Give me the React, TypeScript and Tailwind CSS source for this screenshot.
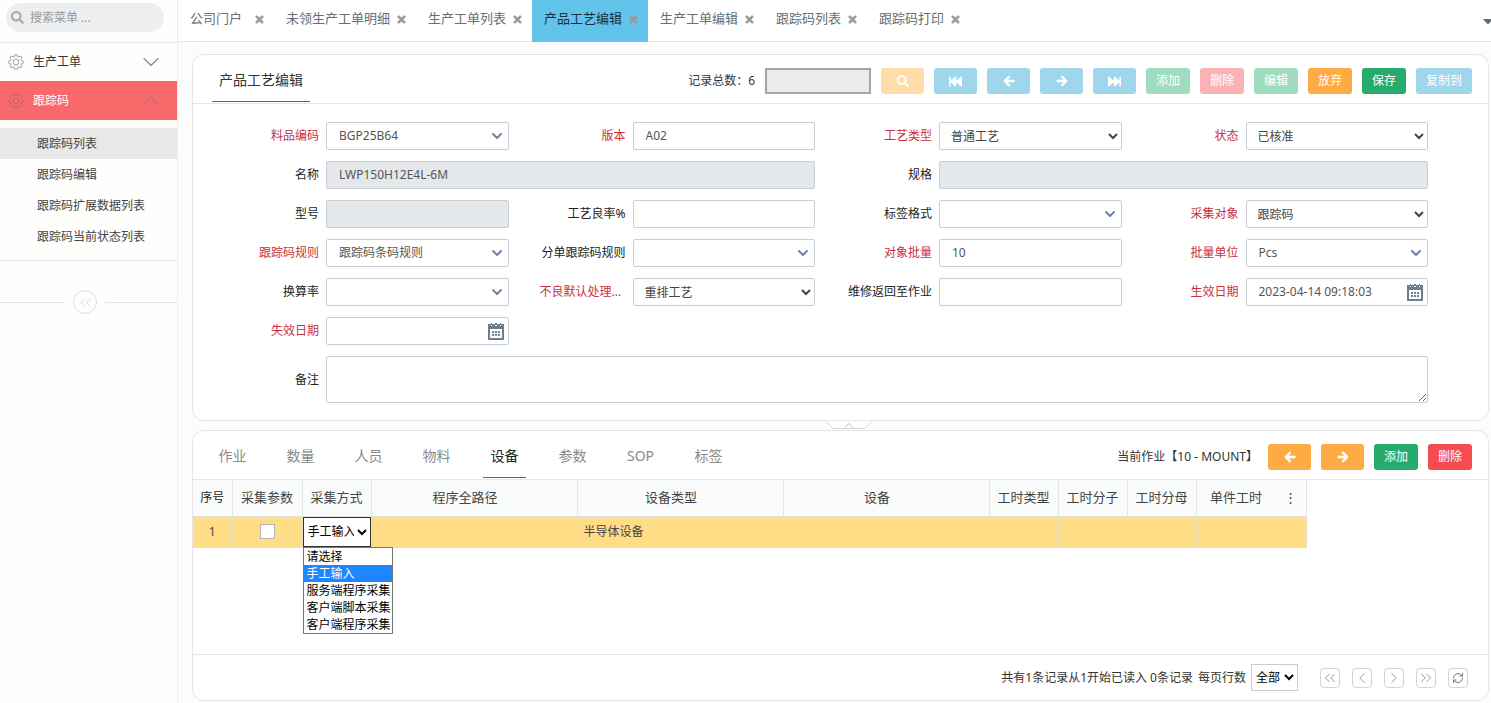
import { ReactNode } from "react";
import { FaArrowLeft, FaArrowRight, FaCaretDown, FaFastBackward, FaFastForward, FaSearch, FaTimes } from "react-icons/fa";
import { BsGear } from "react-icons/bs";
import { ChevronDown, ChevronLeft, ChevronRight, ChevronUp, ChevronsLeft, ChevronsRight, RefreshCw } from "lucide-react";

const tabs = [
  "公司门户",
  "未领生产工单明细",
  "生产工单列表",
  "产品工艺编辑",
  "生产工单编辑",
  "跟踪码列表",
  "跟踪码打印",
];
const activeTab = "产品工艺编辑";

const subMenu = ["跟踪码列表", "跟踪码编辑", "跟踪码扩展数据列表", "跟踪码当前状态列表"];

const detailTabs = ["作业", "数量", "人员", "物料", "设备", "参数", "SOP", "标签"];

const columns = [
  { title: "序号", width: "w-[39px]" },
  { title: "采集参数", width: "w-[70px]" },
  { title: "采集方式", width: "w-[69px]" },
  { title: "程序全路径", width: "w-[206px] pr-[18px]" },
  { title: "设备类型", width: "w-[206px] pr-[18px]" },
  { title: "设备", width: "w-[206px] pr-[18px]" },
  { title: "工时类型", width: "w-[69px]" },
  { title: "工时分子", width: "w-[69px]" },
  { title: "工时分母", width: "w-[69px]" },
];

const collectModes = ["请选择", "手工输入", "服务端程序采集", "客户端脚本采集", "客户端程序采集"];

type FieldProps = {
  id: string;
  label: string;
  kind?: "text" | "combo" | "select" | "date";
  value?: string;
  required?: boolean;
  disabled?: boolean;
  clipped?: boolean;
  span?: string;
};

const CalendarIcon = () => (
  <svg width="16" height="17" viewBox="0 0 16 17" fill="#6b7f8f">
    <path fillRule="evenodd" d="M0 1h3v2h1V1h3v2h2V1h3v2h1V1h3v16H0zM2 6v9h12V6z" />
    <path d="M3 0h1v2H3zM7 0h2v2H7zM12 0h1v2h-1z" />
    <path d="M4 8h2v2H4zM7 8h2v2H7zM10 8h2v2h-2zM4 11h2v2H4zM7 11h2v2H7zM10 11h2v2h-2z" />
  </svg>
);

const Field = ({ id, label, kind = "text", value = "", required, disabled, clipped, span = "" }: FieldProps) => (
  <div className={`flex items-center ${span}`}>
    <div className="flex w-[124px] shrink-0 justify-end pr-[7px]">
      <label
        htmlFor={id}
        className={`w-[86px] whitespace-nowrap ${clipped ? "text-left" : "text-right"} ${required ? "text-[#c9303e]" : "text-[#222]"}`}
      >
        {label}
      </label>
    </div>
    {kind === "select" ? (
      <select
        id={id}
        className="h-7 w-full min-w-0 rounded-xs border border-[#c9ced4] bg-white pr-[3px] pl-[7px] text-[#444]"
      >
        <option>{value}</option>
      </select>
    ) : (
      <div
        className={`flex h-7 w-full min-w-0 items-center rounded-xs border border-[#c9ced4] ${disabled ? "bg-[#e4e8eb]" : "bg-white"}`}
      >
        <input
          id={id}
          type="text"
          defaultValue={value}
          disabled={disabled}
          className="w-full min-w-0 bg-transparent pl-3 text-[#555] focus:outline-none"
        />
        {kind === "combo" && (
          <ChevronDown size={16} strokeWidth={3} className="mr-[3px] shrink-0 text-[#6f82ad]" />
        )}
        {kind === "date" && (
          <button type="button" aria-label="选择日期" className="mr-1 shrink-0">
            <CalendarIcon />
          </button>
        )}
      </div>
    )}
  </div>
);

type ToolButtonProps = {
  color: string;
  label?: string;
  wide?: string;
  children: ReactNode;
};

const ToolButton = ({ color, label, wide = "w-[43px]", children }: ToolButtonProps) => (
  <button
    type="button"
    aria-label={label}
    className={`flex h-[26px] shrink-0 items-center justify-center rounded-[3px] text-xs text-white ${wide} ${color}`}
  >
    {children}
  </button>
);

const Sidebar = () => (
  <nav className="w-[178px] shrink-0 border-r border-[#ececec] bg-[#fefefd]">
    <div className="h-[43px] border-b border-[#e8e8e8] px-[6px] pt-[3px]">
      <div className="mr-[7px] flex h-[29px] items-center rounded-full bg-[#eceef0] px-[5px]">
        <FaSearch size={13} className="shrink-0 text-[#aaa]" />
        <input
          type="text"
          aria-label="搜索菜单"
          placeholder="搜索菜单 ..."
          className="ml-[6px] w-full min-w-0 bg-transparent text-xs placeholder:text-[#999] focus:outline-none"
        />
      </div>
    </div>
    <button type="button" className="flex h-[38px] w-full items-center pr-3 pl-2 text-[#333]">
      <BsGear size={16} className="text-[#aaa]" />
      <span className="ml-[9px] flex-1 text-left">生产工单</span>
      <ChevronDown size={28} strokeWidth={1} className="text-[#888]" />
    </button>
    <button type="button" className="flex h-[39px] w-full items-center bg-[#f9696c] pr-3 pl-2 text-white">
      <BsGear size={16} className="text-[#cc6265]" />
      <span className="ml-[9px] flex-1 text-left">跟踪码</span>
      <ChevronUp size={28} strokeWidth={1} className="text-[#c96d70]" />
    </button>
    <ul className="border-b border-[#e8e8e8] py-2">
      {subMenu.map((item, i) => (
        <li key={item}>
          <a
            href="#"
            className={`flex h-[31px] items-center pl-[37px] text-[#444] ${i === 0 ? "bg-[#e8e8e8]" : ""}`}
          >
            {item}
          </a>
        </li>
      ))}
    </ul>
    <div className="mt-[29px] flex items-center gap-2">
      <span className="h-px w-[65px] bg-[#e5e5e5]" />
      <button
        type="button"
        aria-label="收起菜单"
        className="flex h-6 w-6 items-center justify-center rounded-full border border-[#dcdcdc] text-[#ccc]"
      >
        <ChevronsLeft size={19} strokeWidth={1} />
      </button>
      <span className="h-px flex-1 bg-[#e5e5e5]" />
    </div>
  </nav>
);

const TabBar = () => (
  <div className="flex h-[42px] border-b border-[#dfe6e9] bg-white">
    {tabs.map((tab) => (
      <div
        key={tab}
        className={`-mb-px flex min-w-[96px] items-center justify-between gap-[6px] pr-[9px] pb-1 pl-3 text-[13px] ${
          tab === activeTab ? "bg-[#62c4ea] text-[#16303c]" : "text-[#666e76]"
        }`}
      >
        <a href="#" className="whitespace-nowrap">
          {tab}
        </a>
        <button type="button" aria-label={`关闭${tab}`} className="text-[#999]">
          <FaTimes size={11} strokeWidth={40} stroke="currentColor" />
        </button>
      </div>
    ))}
    <button
      type="button"
      aria-label="更多标签"
      className="ml-auto flex w-[11px] items-center justify-start overflow-hidden text-[#5f6f7d]"
    >
      <FaCaretDown size={16} className="shrink-0" />
    </button>
  </div>
);

const ProcessForm = () => (
  <section className="rounded-xl border border-[#e5e5e5] bg-white">
    <div className="flex h-[49px] items-center justify-between border-b border-[#e5e5e5] pr-4 pl-[19px]">
      <h1 className="flex h-[47px] items-center self-start border-b border-[#666] px-[7px] pt-1 text-sm text-[#333]">
        产品工艺编辑
      </h1>
      <div className="flex items-center gap-[10px] pt-1">
        <label htmlFor="recordNo" className="text-[#333]">
          记录总数：6
        </label>
        <input
          id="recordNo"
          type="text"
          className="h-[26px] w-[106px] border-2 border-[#a5a5a5] bg-[#ebebeb] px-1 focus:outline-none"
        />
        <ToolButton color="bg-[#ffdcaa]" label="查询">
          <FaSearch size={12} />
        </ToolButton>
        <ToolButton color="bg-[#9fd6ec]" label="第一条">
          <FaFastBackward size={13} />
        </ToolButton>
        <ToolButton color="bg-[#9fd6ec]" label="上一条">
          <FaArrowLeft size={12} stroke="currentColor" strokeWidth={30} />
        </ToolButton>
        <ToolButton color="bg-[#9fd6ec]" label="下一条">
          <FaArrowRight size={12} stroke="currentColor" strokeWidth={30} />
        </ToolButton>
        <ToolButton color="bg-[#9fd6ec]" label="最后一条">
          <FaFastForward size={13} />
        </ToolButton>
        <ToolButton color="bg-[#9fdcc0]" wide="w-[44px]">添加</ToolButton>
        <ToolButton color="bg-[#fbb2b5]" wide="w-[44px]">删除</ToolButton>
        <ToolButton color="bg-[#9fdcc0]" wide="w-[44px]">编辑</ToolButton>
        <ToolButton color="bg-[#ffab45]" wide="w-[44px]">放弃</ToolButton>
        <ToolButton color="bg-[#27ab6c]" wide="w-[44px]">保存</ToolButton>
        <ToolButton color="bg-[#9fd6ec]" wide="w-14">复制到</ToolButton>
      </div>
    </div>
    <form className="grid grid-cols-4 gap-y-[11px] pt-[18px] pr-[60px] pb-[17px] pl-[9px]">
      <Field id="itemCode" label="料品编码" kind="combo" value="BGP25B64" required />
      <Field id="version" label="版本" value="A02" required />
      <Field id="processType" label="工艺类型" kind="select" value="普通工艺" required />
      <Field id="status" label="状态" kind="select" value="已核准" required />
      <Field id="name" label="名称" value="LWP150H12E4L-6M" disabled span="col-span-2" />
      <Field id="spec" label="规格" disabled span="col-span-2" />
      <Field id="model" label="型号" disabled />
      <Field id="yieldRate" label="工艺良率%" />
      <Field id="labelFormat" label="标签格式" kind="combo" />
      <Field id="target" label="采集对象" kind="select" value="跟踪码" required />
      <Field id="codeRule" label="跟踪码规则" kind="combo" value="跟踪码条码规则" required />
      <Field id="splitRule" label="分单跟踪码规则" kind="combo" />
      <Field id="batchQty" label="对象批量" value="10" required />
      <Field id="batchUnit" label="批量单位" kind="combo" value="Pcs" required />
      <Field id="convertRate" label="换算率" kind="combo" />
      <Field id="defectAction" label="不良默认处理..." kind="select" value="重排工艺" required clipped />
      <Field id="repairReturn" label="维修返回至作业" />
      <Field id="startDate" label="生效日期" kind="date" value="2023-04-14 09:18:03" required />
      <Field id="endDate" label="失效日期" kind="date" required />
      <div className="col-span-4 flex items-center">
        <label htmlFor="remark" className="w-[124px] shrink-0 pr-[7px] text-right text-[#222]">
          备注
        </label>
        <textarea
          id="remark"
          className="h-[47px] w-full resize-y rounded-xs border border-[#c9ced4] bg-white px-3 py-1 focus:outline-none"
        />
      </div>
    </form>
  </section>
);

const DeviceTable = () => (
  <table className="table-fixed border-collapse text-[#444]">
    <thead>
      <tr className="h-[36px] bg-[#fafcfb] text-[13px]">
        {columns.map((col, i) => (
          <th
            key={col.title}
            className={`border-r border-b border-[#e2e4e4] p-0 font-normal whitespace-nowrap ${col.width} ${
              i === 0 ? "text-xs text-[#222]" : ""
            }`}
          >
            {col.title}
          </th>
        ))}
        <th className="w-[110px] border-r border-b border-[#e2e4e4] p-0 font-normal">
          <div className="flex items-center">
            <span className="flex-1">单件工时</span>
            <button type="button" aria-label="列设置" className="w-[30px]">
              ⋮
            </button>
          </div>
        </th>
      </tr>
    </thead>
    <tbody>
      <tr className="h-[30px] bg-[#ffdd86]">
        <td className="border-r border-b border-[#e6dfc8] p-0 text-center">1</td>
        <td className="border-r border-b border-[#e6dfc8] p-0">
          <input
            type="checkbox"
            aria-label="采集参数"
            className="mx-auto block h-[15px] w-[15px] appearance-none border border-[#b5b5b5] bg-white"
          />
        </td>
        <td className="relative border-r border-b border-[#e6dfc8] p-0">
          <select
            aria-label="采集方式"
            defaultValue="手工输入"
            className="block h-[30px] w-full border border-[#333] bg-white text-black focus:outline-none"
          >
            {collectModes.map((mode) => (
              <option key={mode}>{mode}</option>
            ))}
          </select>
          <ul className="absolute top-full left-0 z-10 w-[90px] border border-[#777] bg-white text-black">
            {collectModes.map((mode) => (
              <li
                key={mode}
                className={`h-[17px] pl-[3px] leading-[17px] whitespace-nowrap ${mode === "手工输入" ? "bg-[#1e86ff] text-white" : ""}`}
              >
                {mode}
              </li>
            ))}
          </ul>
        </td>
        <td className="border-r border-b border-[#e6dfc8]" />
        <td className="border-r border-b border-[#e6dfc8] px-[6px]">半导体设备</td>
        <td className="border-r border-b border-[#e6dfc8]" />
        <td className="border-r border-b border-[#e6dfc8]" />
        <td className="border-r border-b border-[#e6dfc8]" />
        <td className="border-r border-b border-[#e6dfc8]" />
        <td className="border-r border-b border-[#e6dfc8]" />
      </tr>
    </tbody>
  </table>
);

const PageButton = ({ label, children }: { label: string; children: ReactNode }) => (
  <button
    type="button"
    aria-label={label}
    className="flex h-5 w-5 items-center justify-center rounded-[4px] border border-[#d4d4d4] text-[#777]"
  >
    {children}
  </button>
);

const DetailPanel = () => (
  <section className="flex flex-1 flex-col rounded-xl border border-[#e5e5e5] bg-white">
    <div className="flex h-[49px] items-center justify-between border-b border-[#e5e5e5] pr-4 pl-[18px]">
      <div className="flex h-[47px] gap-[25px] self-start text-sm">
        {detailTabs.map((tab) => (
          <a
            key={tab}
            href="#"
            className={`flex w-[43px] items-center justify-center border-b pt-1 ${
              tab === "设备" ? "border-[#666] text-[#222]" : "border-transparent text-[#8a8a8a]"
            }`}
          >
            {tab}
          </a>
        ))}
      </div>
      <div className="flex items-center gap-[10px] pt-1">
        <span className="text-[#333]">当前作业【10 - MOUNT】</span>
        <ToolButton color="bg-[#ffab45]" label="上一作业">
          <FaArrowLeft size={12} stroke="currentColor" strokeWidth={30} />
        </ToolButton>
        <ToolButton color="bg-[#ffab45]" label="下一作业">
          <FaArrowRight size={12} stroke="currentColor" strokeWidth={30} />
        </ToolButton>
        <ToolButton color="bg-[#27ab6c]" wide="w-[44px]">添加</ToolButton>
        <ToolButton color="bg-[#f44c50]" wide="w-[44px]">删除</ToolButton>
      </div>
    </div>
    <div className="flex-1">
      <DeviceTable />
    </div>
    <div className="flex h-[46px] items-center justify-end border-t border-[#e5e5e5] pr-5 text-[#333]">
      <span>共有1条记录从1开始已读入 0条记录</span>
      <label htmlFor="pageSize" className="ml-[5px]">
        每页行数
      </label>
      <select id="pageSize" className="mr-[22px] ml-[5px] h-[27px] w-[47px] border border-[#c5cad6] bg-white text-black">
        <option>全部</option>
      </select>
      <div className="flex gap-3">
        <PageButton label="首页">
          <ChevronsLeft size={18} strokeWidth={1} />
        </PageButton>
        <PageButton label="上一页">
          <ChevronLeft size={18} strokeWidth={1} />
        </PageButton>
        <PageButton label="下一页">
          <ChevronRight size={18} strokeWidth={1} />
        </PageButton>
        <PageButton label="末页">
          <ChevronsRight size={18} strokeWidth={1} />
        </PageButton>
        <PageButton label="刷新">
          <RefreshCw size={12} strokeWidth={2} />
        </PageButton>
      </div>
    </div>
  </section>
);

export default function App() {
  return (
    <div className="flex min-h-screen bg-[#fcfcfc] font-['Noto_Sans','Noto_Sans_CJK_SC',sans-serif] text-xs">
      <Sidebar />
      <main className="flex min-w-0 flex-1 flex-col">
        <TabBar />
        <div className="flex flex-1 flex-col pt-3 pr-[2px] pb-[2px] pl-[14px]">
          <ProcessForm />
          <div className="flex justify-center pl-4">
            <button type="button" aria-label="收起表单" className="h-[9px]">
              <svg width="48" height="9" viewBox="0 0 48 9" fill="none" stroke="#d5d5d5">
                <path d="M1 0l7 7.5h32L47 0" fill="#fff" />
                <path d="M20 6.5l4-4 4 4" stroke="#bbb" />
              </svg>
            </button>
          </div>
          <DetailPanel />
        </div>
      </main>
    </div>
  );
}
